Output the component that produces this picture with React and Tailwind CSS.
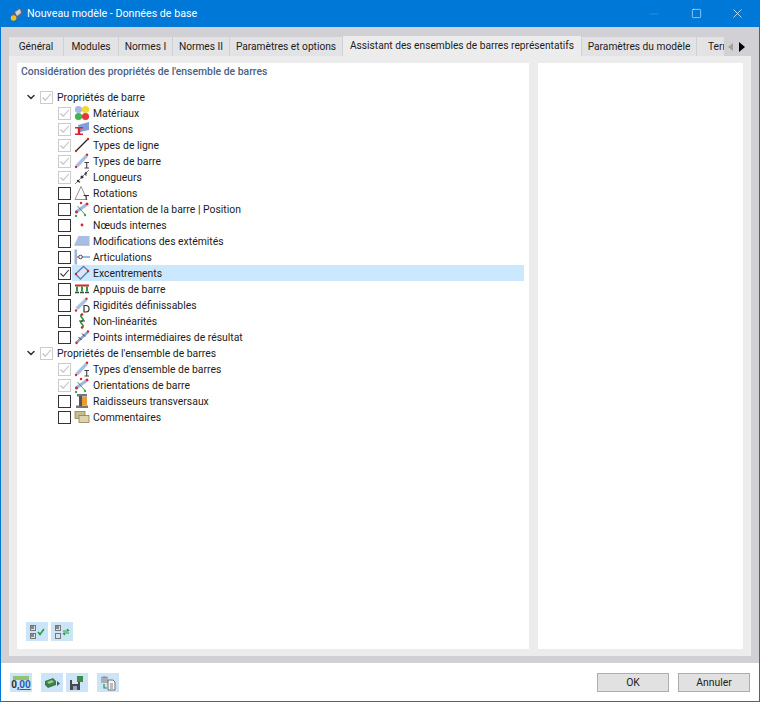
import { Minus, Square, X, ChevronDown } from 'lucide-react'

const Svg = ({ children }) => (
  <svg viewBox="0 0 16 16" className="w-4 h-4 shrink-0">{children}</svg>
)

const Dot = ({ x, y, c = '#d8262c', r = 1.2 }) => <circle cx={x} cy={y} r={r} fill={c} />

const icons = {
  materials: (
    <Svg>
      <circle cx="4.5" cy="4.5" r="3.6" fill="#a9b7e8" />
      <circle cx="11.5" cy="4.5" r="3.6" fill="#f2d93a" />
      <circle cx="4.5" cy="11.5" r="3.6" fill="#3fb54a" />
      <circle cx="11.5" cy="11.5" r="3.6" fill="#e2383d" />
    </Svg>
  ),
  sections: (
    <Svg>
      <path d="M4 4 L15 1 V9 L6 11Z" fill="#7f9fd6" />
      <path d="M1 6h8v1.6H6.2v4.8H9V14H1v-1.6h2.8V7.6H1Z" fill="#d8262c" />
    </Svg>
  ),
  line: (
    <Svg>
      <path d="M2 14 L14 2" stroke="#222" strokeWidth="1.2" />
      <Dot x={2} y={14} />
      <Dot x={14} y={2} />
    </Svg>
  ),
  barType: (
    <Svg>
      <path d="M1.5 12 L11.5 1.5 L14 3.5 L4 14.5Z" fill="#a8c0e4" />
      <Dot x={2} y={14} />
      <Dot x={13} y={1.8} />
      <path d="M10.5 9.5h4.5M12.7 9.5v5.5M10.5 15h4.5" stroke="#444" strokeWidth="1.1" fill="none" />
    </Svg>
  ),
  lengths: (
    <Svg>
      <path d="M1 15 L15 1" stroke="#777" strokeWidth="0.9" />
      <path d="M4 11.5l2 2M10.5 4.5l2 2" stroke="#555" strokeWidth="1.2" />
      <Dot x={4} y={12} c="#333" />
      <Dot x={8} y={8} c="#333" r={1.5} />
      <Dot x={12} y={4} c="#555" />
    </Svg>
  ),
  rotation: (
    <Svg>
      <path d="M1 14.5 L7 1.5 L13 14.5Z" fill="none" stroke="#888" strokeWidth="0.9" />
      <path d="M9.5 10.5h5.5M12.2 10.5v4.5" stroke="#333" strokeWidth="1" />
    </Svg>
  ),
  orientation: (
    <Svg>
      <path d="M2 11 L12 4" stroke="#9db8e0" strokeWidth="3" />
      <Dot x={2.5} y={11} r={1.5} />
      <Dot x={13} y={3} r={1.5} />
      <path d="M3.5 5 L10.5 13" stroke="#3aa845" strokeWidth="1" />
      <Dot x={2} y={15} c="#3aa845" />
      <Dot x={11} y={14} c="#3aa845" />
      <Dot x={7} y={2} />
    </Svg>
  ),
  nodes: (
    <Svg>
      <circle cx="8" cy="8" r="1.4" fill="#d8262c" />
    </Svg>
  ),
  endMods: (
    <Svg>
      <path d="M4.5 3 H15.5 V11.5 H0.5Z" fill="#a8bee2" />
      <path d="M0.5 12 H15.5" stroke="#7a93bb" strokeWidth="1" />
    </Svg>
  ),
  hinges: (
    <Svg>
      <rect x="0.5" y="0.5" width="2.6" height="15" fill="#9db8e0" />
      <path d="M8 8h8" stroke="#9db8e0" strokeWidth="2" />
      <circle cx="6.5" cy="8" r="1.8" fill="#fff" stroke="#333" strokeWidth="0.9" />
      <path d="M3 8h2" stroke="#d8262c" strokeWidth="1.2" />
    </Svg>
  ),
  eccentric: (
    <Svg>
      <path d="M1.5 9 L9.5 1.5 L14.5 6 L6.5 14Z" fill="#dce8f7" stroke="#5c82b8" strokeWidth="1.4" />
      <Dot x={2} y={9} />
      <Dot x={14} y={6} />
    </Svg>
  ),
  supports: (
    <Svg>
      <rect x="1" y="3.5" width="14" height="2" fill="#d8262c" />
      <path d="M3 5.5v5M8 5.5v5M13 5.5v5" stroke="#2f9a42" strokeWidth="2" />
      <path d="M1 11.5h4M6 11.5h4M11 11.5h4" stroke="#444" strokeWidth="1.4" />
    </Svg>
  ),
  rigidity: (
    <Svg>
      <path d="M1.5 10.5 L11 1.5 L13.5 3.5 L4 13Z" fill="#a8c0e4" />
      <Dot x={2} y={13.5} />
      <Dot x={12.5} y={1.8} />
      <path d="M10 8.5v6.5h1.8a3.2 3.2 0 0 0 0-6.5Z" fill="none" stroke="#333" strokeWidth="1.2" />
    </Svg>
  ),
  nonlinear: (
    <Svg>
      <path d="M8 1 C4 4 12 6 8 8 C4 10 12 12 8 15" fill="none" stroke="#2f9a42" strokeWidth="1.8" />
      <Dot x={8} y={1.5} />
      <Dot x={8} y={14.5} />
      <path d="M5 8h6" stroke="#333" strokeWidth="1" />
    </Svg>
  ),
  points: (
    <Svg>
      <path d="M2 14 L14 3" stroke="#8aa6d0" strokeWidth="2.4" />
      <path d="M4.5 8l3 3M8 4.5l3 3" stroke="#333" strokeWidth="1" />
      <Dot x={2.5} y={14} />
      <Dot x={14} y={2.5} />
    </Svg>
  ),
  stiffeners: (
    <Svg>
      <path d="M3 1h10v2.4H3ZM2 12.6h12V15H2Z" fill="#777777" />
      <rect x="5" y="3" width="3" height="10" fill="#555555" />
      <path d="M8 4h5v8H8Z" fill="#ee9a2c" />
    </Svg>
  ),
  comments: (
    <Svg>
      <rect x="1" y="2.5" width="10" height="7" fill="#c9bd8e" stroke="#8d8254" strokeWidth="0.8" />
      <rect x="5" y="6.5" width="10" height="7" fill="#ddd4ad" stroke="#8d8254" strokeWidth="0.8" />
    </Svg>
  ),
}

const barItems = [
  ['Matériaux', 'materials', 'off'],
  ['Sections', 'sections', 'off'],
  ['Types de ligne', 'line', 'off'],
  ['Types de barre', 'barType', 'off'],
  ['Longueurs', 'lengths', 'off'],
  ['Rotations', 'rotation'],
  ['Orientation de la barre | Position', 'orientation'],
  ['Nœuds internes', 'nodes'],
  ['Modifications des extémités', 'endMods'],
  ['Articulations', 'hinges'],
  ['Excentrements', 'eccentric', 'on'],
  ['Appuis de barre', 'supports'],
  ['Rigidités définissables', 'rigidity'],
  ['Non-linéarités', 'nonlinear'],
  ['Points intermédiaires de résultat', 'points'],
]

const setItems = [
  ["Types d'ensemble de barres", 'barType', 'off'],
  ['Orientations de barre', 'orientation', 'off'],
  ['Raidisseurs transversaux', 'stiffeners'],
  ['Commentaires', 'comments'],
]

const tabs = [
  ['Général', 'w-[54px]'],
  ['Modules', 'w-[54px]'],
  ['Normes I', 'w-[53px]'],
  ['Normes II', 'w-[56px]'],
  ['Paramètres et options', 'w-[112px]'],
]

function Check({ state }) {
  const disabled = state === 'off'
  return (
    <span className={`w-[13px] h-[13px] border shrink-0 flex items-center justify-center bg-white ${disabled ? 'border-[#cccccc]' : 'border-[#333333]'}`}>
      {state && (
        <svg viewBox="0 0 11 11" className="w-[11px] h-[11px]">
          <path d="M1.5 5.5 L4.3 8.3 L9.8 2" fill="none" stroke={disabled ? '#bcbcbc' : '#333333'} strokeWidth="1.1" />
        </svg>
      )}
    </span>
  )
}

function Item({ label, icon, state }) {
  return (
    <div className="h-4 flex items-center pl-[41px]">
      <Check state={state} />
      <div className={`flex items-center h-4 ml-px w-[452px] ${state === 'on' ? 'bg-[#cce8ff]' : ''}`}>
        <span className="ml-[2px]">{icons[icon]}</span>
        <span className="ml-[3px] mt-[2px] whitespace-nowrap">{label}</span>
      </div>
    </div>
  )
}

function Group({ label }) {
  return (
    <div className="h-4 flex items-center pl-[8px]">
      <ChevronDown size={12} strokeWidth={3} className="text-[#333333] shrink-0" />
      <span className="ml-[3px]"><Check state="off" /></span>
      <span className="ml-[4px] mt-[2px] whitespace-nowrap">{label}</span>
    </div>
  )
}

const ToolBtn = ({ className = 'w-[22px]', children }) => (
  <button className={`h-[19px] bg-[#cce4f7] flex items-center justify-center shrink-0 ${className}`}>
    {children}
  </button>
)

const MiniCheck = ({ on = true }) => (
  <span className="w-[6px] h-[6px] border border-[#777777] flex items-center justify-center">
    {on && <span className="w-[3px] h-[3px] bg-[#888888]" />}
  </span>
)

export default function App() {
  return (
    <div className="w-[760px] h-[702px] flex flex-col bg-white border-x border-b border-[#0078d7] overflow-hidden text-[10.4px] leading-4 text-[#1c1c1c] font-['Roboto',sans-serif]">
      {/* Title bar */}
      <div className="h-[27px] shrink-0 -mx-px bg-[#0078d7] flex items-center text-white">
        <svg viewBox="0 0 16 16" className="w-4 h-4 ml-[9px] shrink-0">
          <path d="M2 9 L9 2 L14 4 L13 9 L7 14Z" fill="#56677f" />
          <path d="M6 6 L11 3 L12 7 L8 10Z" fill="#c8d3e2" />
          <circle cx="4.5" cy="12" r="2.8" fill="#f0c020" />
        </svg>
        <span className="ml-[2px] text-[10.7px] whitespace-nowrap">Nouveau modèle - Données de base</span>
        <div className="ml-auto flex items-center">
          <Minus size={14} strokeWidth={1} className="text-[#4da1e3] mr-[30px]" />
          <Square size={11} strokeWidth={1.2} className="mr-[28px]" />
          <X size={15} strokeWidth={1.1} className="mr-[15px]" />
        </div>
      </div>

      {/* Gray body */}
      <div className="flex-1 min-h-0 bg-[#d1d1d5] pl-2 pr-[8px] pb-[7px] flex flex-col">
        <div className="h-[29px] shrink-0 flex items-end relative overflow-hidden text-[10.2px]">
          {tabs.map(([name, w]) => (
            <div key={name} className={`${w} h-[19px] mr-px bg-[#e3e3e5] flex items-center justify-center whitespace-nowrap shrink-0`}>
              {name}
            </div>
          ))}
          <div className="w-[238px] h-5 mr-px bg-[#ececec] flex items-center justify-center whitespace-nowrap shrink-0">
            Assistant des ensembles de barres représentatifs
          </div>
          <div className="w-[114px] h-[19px] mr-px bg-[#e3e3e5] flex items-center justify-center whitespace-nowrap shrink-0">
            Paramètres du modèle
          </div>
          <div className="w-[32px] h-[19px] bg-[#e3e3e5] pl-[11px] flex items-center whitespace-nowrap shrink-0 overflow-hidden">
            Terrain
          </div>
          <div className="absolute right-0 bottom-0 w-[27px] h-[19px] bg-[#d1d1d5] flex items-center gap-[6px] pl-[4px]">
            <span className="w-0 h-0 border-y-[4.5px] border-y-transparent border-r-[5px] border-r-[#a0a0a0]" />
            <span className="w-0 h-0 border-y-[5px] border-y-transparent border-l-[6px] border-l-black" />
          </div>
        </div>

        <div className="flex-1 min-h-0 bg-[#ececec] px-2 pt-[7px] pb-[7px] flex gap-[9px]">
          <div className="w-[512px] bg-white flex flex-col">
            <div className="h-4 pl-1 mt-px font-medium text-[#4b6186] whitespace-nowrap">
              Considération des propriétés de l'ensemble de barres
            </div>
            <div className="mt-[9px] flex-1">
              <Group label="Propriétés de barre" />
              {barItems.map(([label, icon, state]) => (
                <Item key={label} label={label} icon={icon} state={state} />
              ))}
              <Group label="Propriétés de l'ensemble de barres" />
              {setItems.map(([label, icon, state]) => (
                <Item key={label} label={label} icon={icon} state={state} />
              ))}
            </div>
            <div className="flex gap-[3px] pl-[9px] pb-[8px]">
              <ToolBtn>
                <div className="flex items-center gap-px">
                  <div className="flex flex-col gap-[2px]"><MiniCheck /><MiniCheck /></div>
                  <svg viewBox="0 0 8 8" className="w-2 h-2"><path d="M1 4l2 2.5L7 1" fill="none" stroke="#20a040" strokeWidth="1.6" /></svg>
                </div>
              </ToolBtn>
              <ToolBtn>
                <div className="flex items-center gap-px">
                  <div className="flex flex-col gap-[2px]"><MiniCheck /><MiniCheck on={false} /></div>
                  <svg viewBox="0 0 8 8" className="w-2 h-2"><path d="M1 3h5M7 3L5 1M7 5H2M1 5l2 2" fill="none" stroke="#20a040" strokeWidth="1.2" /></svg>
                </div>
              </ToolBtn>
            </div>
          </div>
          <div className="flex-1 bg-white" />
        </div>
      </div>

      {/* Footer */}
      <div className="h-[38px] shrink-0 flex items-start pt-[10px] pl-[9px] pr-[9px]">
        <ToolBtn>
          <div className="flex flex-col items-center leading-none">
            <span className="w-[16px] h-[4px] bg-[#8fc46a]" />
            <span className="text-[10px] font-bold leading-[10px] text-[#333333]">0,<span className="text-[#2a5db0] underline">00</span></span>
          </div>
        </ToolBtn>
        <ToolBtn className="w-[22px] ml-[9px]">
          <svg viewBox="0 0 16 16" className="w-4 h-4">
            <path d="M1 6 L9 3 L12 6 L12 10 L4 13 L1 10Z" fill="#3d7d48" />
            <path d="M3 7l5-2 2 2-5 2Z" fill="#8fcf90" />
            <path d="M13 6l3 2.5-3 2.5Z" fill="#555555" />
          </svg>
        </ToolBtn>
        <ToolBtn className="w-[22px] ml-[3px]">
          <svg viewBox="0 0 16 16" className="w-4 h-4">
            <path d="M1 5h10v10H1Z" fill="#3f4a55" />
            <rect x="3" y="5" width="6" height="4" fill="#dbe3ea" />
            <rect x="4" y="11" width="4" height="4" fill="#9aa5af" />
            <path d="M8 1h6v6H8Z" fill="#3d8d4a" />
          </svg>
        </ToolBtn>
        <ToolBtn className="w-[22px] ml-[9px]">
          <svg viewBox="0 0 16 16" className="w-4 h-4">
            <ellipse cx="4.5" cy="3" rx="3.5" ry="1.8" fill="#8d96a0" />
            <rect x="1" y="3" width="7" height="5" fill="#a6aeb6" />
            <path d="M4 9v4h3" fill="none" stroke="#2e8f48" strokeWidth="1.2" />
            <path d="M8 5h5l2 2v8H8Z" fill="#f4f4f4" stroke="#555555" strokeWidth="0.8" />
            <path d="M10 9h3M10 11h3M10 13h3" stroke="#555555" strokeWidth="0.7" />
          </svg>
        </ToolBtn>
        <div className="ml-auto flex gap-[9px]">
          <button className="w-[72px] h-[19px] bg-[#e1e1e1] border border-[#adadad] flex items-center justify-center">OK</button>
          <button className="w-[72px] h-[19px] bg-[#e1e1e1] border border-[#adadad] flex items-center justify-center">Annuler</button>
        </div>
      </div>
    </div>
  )
}
